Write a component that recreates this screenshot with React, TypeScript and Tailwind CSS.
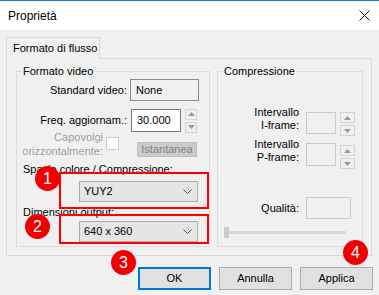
import React from 'react';

function Arrow({ up }: { up?: boolean }) {
  return (
    <svg width="7" height="4" viewBox="0 0 7 4">
      <path d={up ? 'M0 4 L3.5 0 L7 4 Z' : 'M0 0 L3.5 4 L7 0 Z'} fill="#9a9a9a" />
    </svg>
  );
}

function Spinner({ wide }: { wide?: boolean }) {
  const btn = `${wide ? 'w-[15px]' : 'w-[12px]'} h-[11px] flex items-center justify-center border border-[#d4d4d4] bg-[#f0f0f0]`;
  return (
    <div className="flex flex-col gap-[2px]">
      <div className={btn}><Arrow up /></div>
      <div className={btn}><Arrow /></div>
    </div>
  );
}

function Dropdown({ value }: { value: string }) {
  return (
    <div className="ml-[62px] w-[119px] h-[21px] flex items-center justify-between border border-[#adadad] bg-[#e5e5e5] pl-[4px] pr-[5px]">
      <span>{value}</span>
      <svg width="9" height="5" viewBox="0 0 9 5">
        <path d="M0.5 0.5 L4.5 4.5 L8.5 0.5" fill="none" stroke="#555" strokeWidth="1" />
      </svg>
    </div>
  );
}

function Badge({ n, cls }: { n: number; cls: string }) {
  return (
    <div className={`absolute w-[25px] h-[25px] rounded-full bg-[#f00000] text-white text-[16px] leading-none flex items-center justify-center ${cls}`}>
      {n}
    </div>
  );
}

export default function App() {
  return (
    <div className="relative w-[379px] h-[295px] overflow-hidden bg-[#f0f0f0] text-[11px] text-black font-['Liberation_Sans',Arial,sans-serif]">
      {/* barra del titolo */}
      <div className="h-[30px] bg-white border-t border-[#1a7fd6] flex items-center justify-between pl-[8px] pr-[9px]">
        <span className="text-[12px]">Proprietà</span>
        <svg width="11" height="11" viewBox="0 0 11 11">
          <path d="M0.5 0.5 L10.5 10.5 M10.5 0.5 L0.5 10.5" stroke="#111" strokeWidth="1" />
        </svg>
      </div>

      <div className="pt-[7px] pl-[6px]">
        <div className="relative z-10 -mb-[1px] w-[94px] h-[22px] border-t border-l border-r border-[#d9d9d9] bg-[#f0f0f0] pl-[6px] flex items-center whitespace-nowrap">
          Formato di flusso
        </div>
        <div className="w-[366px] h-[198px] border border-[#d9d9d9] pl-[9px] pt-[5px] flex gap-[7px]">
          {/* Formato video */}
          <fieldset className="w-[194px] h-[183px] border border-[#dcdcdc]">
            <legend className="ml-[5px] px-[1px] leading-[14px]">Formato video</legend>
            <div className="mt-[1px] h-[22px] flex items-center">
              <div className="w-[110px] text-right">Standard video:</div>
              <div className="ml-[3px] w-[69px] h-[22px] border border-[#8a8a8a] flex items-center pl-[5px]">None</div>
            </div>
            <div className="mt-[8px] h-[23px] flex items-center">
              <div className="w-[110px] text-right">Freq. aggiornam.:</div>
              <div className="ml-[4px] w-[50px] h-[23px] border border-[#7a7a7a] bg-white flex items-center pl-[5px]">30.000</div>
              <div className="ml-[4px]"><Spinner /></div>
            </div>
            <div className="-mt-[2px] flex items-start">
              <div className="w-[86px] text-right leading-[14px] text-[#a0a0a0]">Capovolgi<br />orizzontalmente:</div>
              <div className="ml-[3px] mt-[7px] w-[13px] h-[13px] border border-[#cccccc] bg-white" />
              <div className="ml-[18px] mt-[12px] w-[60px] h-[15px] border border-[#bfbfbf] bg-[#cccccc] text-[#838383] flex items-center justify-center">Istantanea</div>
            </div>
            <div className="mt-[4px] pl-[6px] leading-[14px]">Spazio colore / Compressione:</div>
            <div className="mt-[5px]"><Dropdown value="YUY2" /></div>
            <div className="mt-[3px] pl-[6px] leading-[14px]">Dimensioni output:</div>
            <div className="mt-[2px]"><Dropdown value="640 x 360" /></div>
          </fieldset>

          {/* Compressione */}
          <fieldset className="w-[146px] h-[183px] border border-[#dcdcdc]">
            <legend className="ml-[5px] px-[1px] leading-[14px]">Compressione</legend>
            <div className="mt-[28px] flex items-start">
              <div className="w-[81px] text-right leading-[13px]">Intervallo<br />I-frame:</div>
              <div className="ml-[7px] mt-[6px] w-[30px] h-[22px] border border-[#cccccc]" />
              <div className="ml-[4px] mt-[6px]"><Spinner wide /></div>
            </div>
            <div className="mt-[2px] flex items-start">
              <div className="w-[81px] text-right leading-[13px]">Intervallo<br />P-frame:</div>
              <div className="ml-[7px] mt-[5px] w-[30px] h-[23px] border border-[#cccccc]" />
              <div className="ml-[4px] mt-[7px]"><Spinner wide /></div>
            </div>
            <div className="mt-[28px] h-[22px] flex items-center">
              <div className="w-[81px] text-right">Qualità:</div>
              <div className="ml-[7px] w-[45px] h-[22px] border border-[#cccccc]" />
            </div>
            <div className="relative mt-[8px] ml-[6px] w-[122px] h-[11px] flex items-center">
              <div className="w-full h-[3px] bg-[#d6d6d6]" />
              <div className="absolute left-0 top-0 w-[5px] h-[11px] bg-[#cccccc]" />
            </div>
          </fieldset>
        </div>
      </div>

      <div className="mt-[11px] pr-[6px] flex justify-end gap-[8px]">
        <button className="w-[73px] h-[23px] border-2 border-[#0078d7] bg-[#e1e1e1]">OK</button>
        <button className="w-[73px] h-[23px] border border-[#adadad] bg-[#e1e1e1]">Annulla</button>
        <button className="w-[73px] h-[23px] border border-[#adadad] bg-[#e1e1e1]">Applica</button>
      </div>

      {/* annotazioni */}
      <div className="absolute left-[59px] top-[172px] w-[150px] h-[37px] border-2 border-[#ff0000]" />
      <div className="absolute left-[59px] top-[214px] w-[150px] h-[30px] border-2 border-[#ff0000]" />
      <Badge n={1} cls="left-[35px] top-[166px]" />
      <Badge n={2} cls="left-[25px] top-[214px]" />
      <Badge n={3} cls="left-[111px] top-[250px]" />
      <Badge n={4} cls="left-[343px] top-[240px]" />
    </div>
  );
}
